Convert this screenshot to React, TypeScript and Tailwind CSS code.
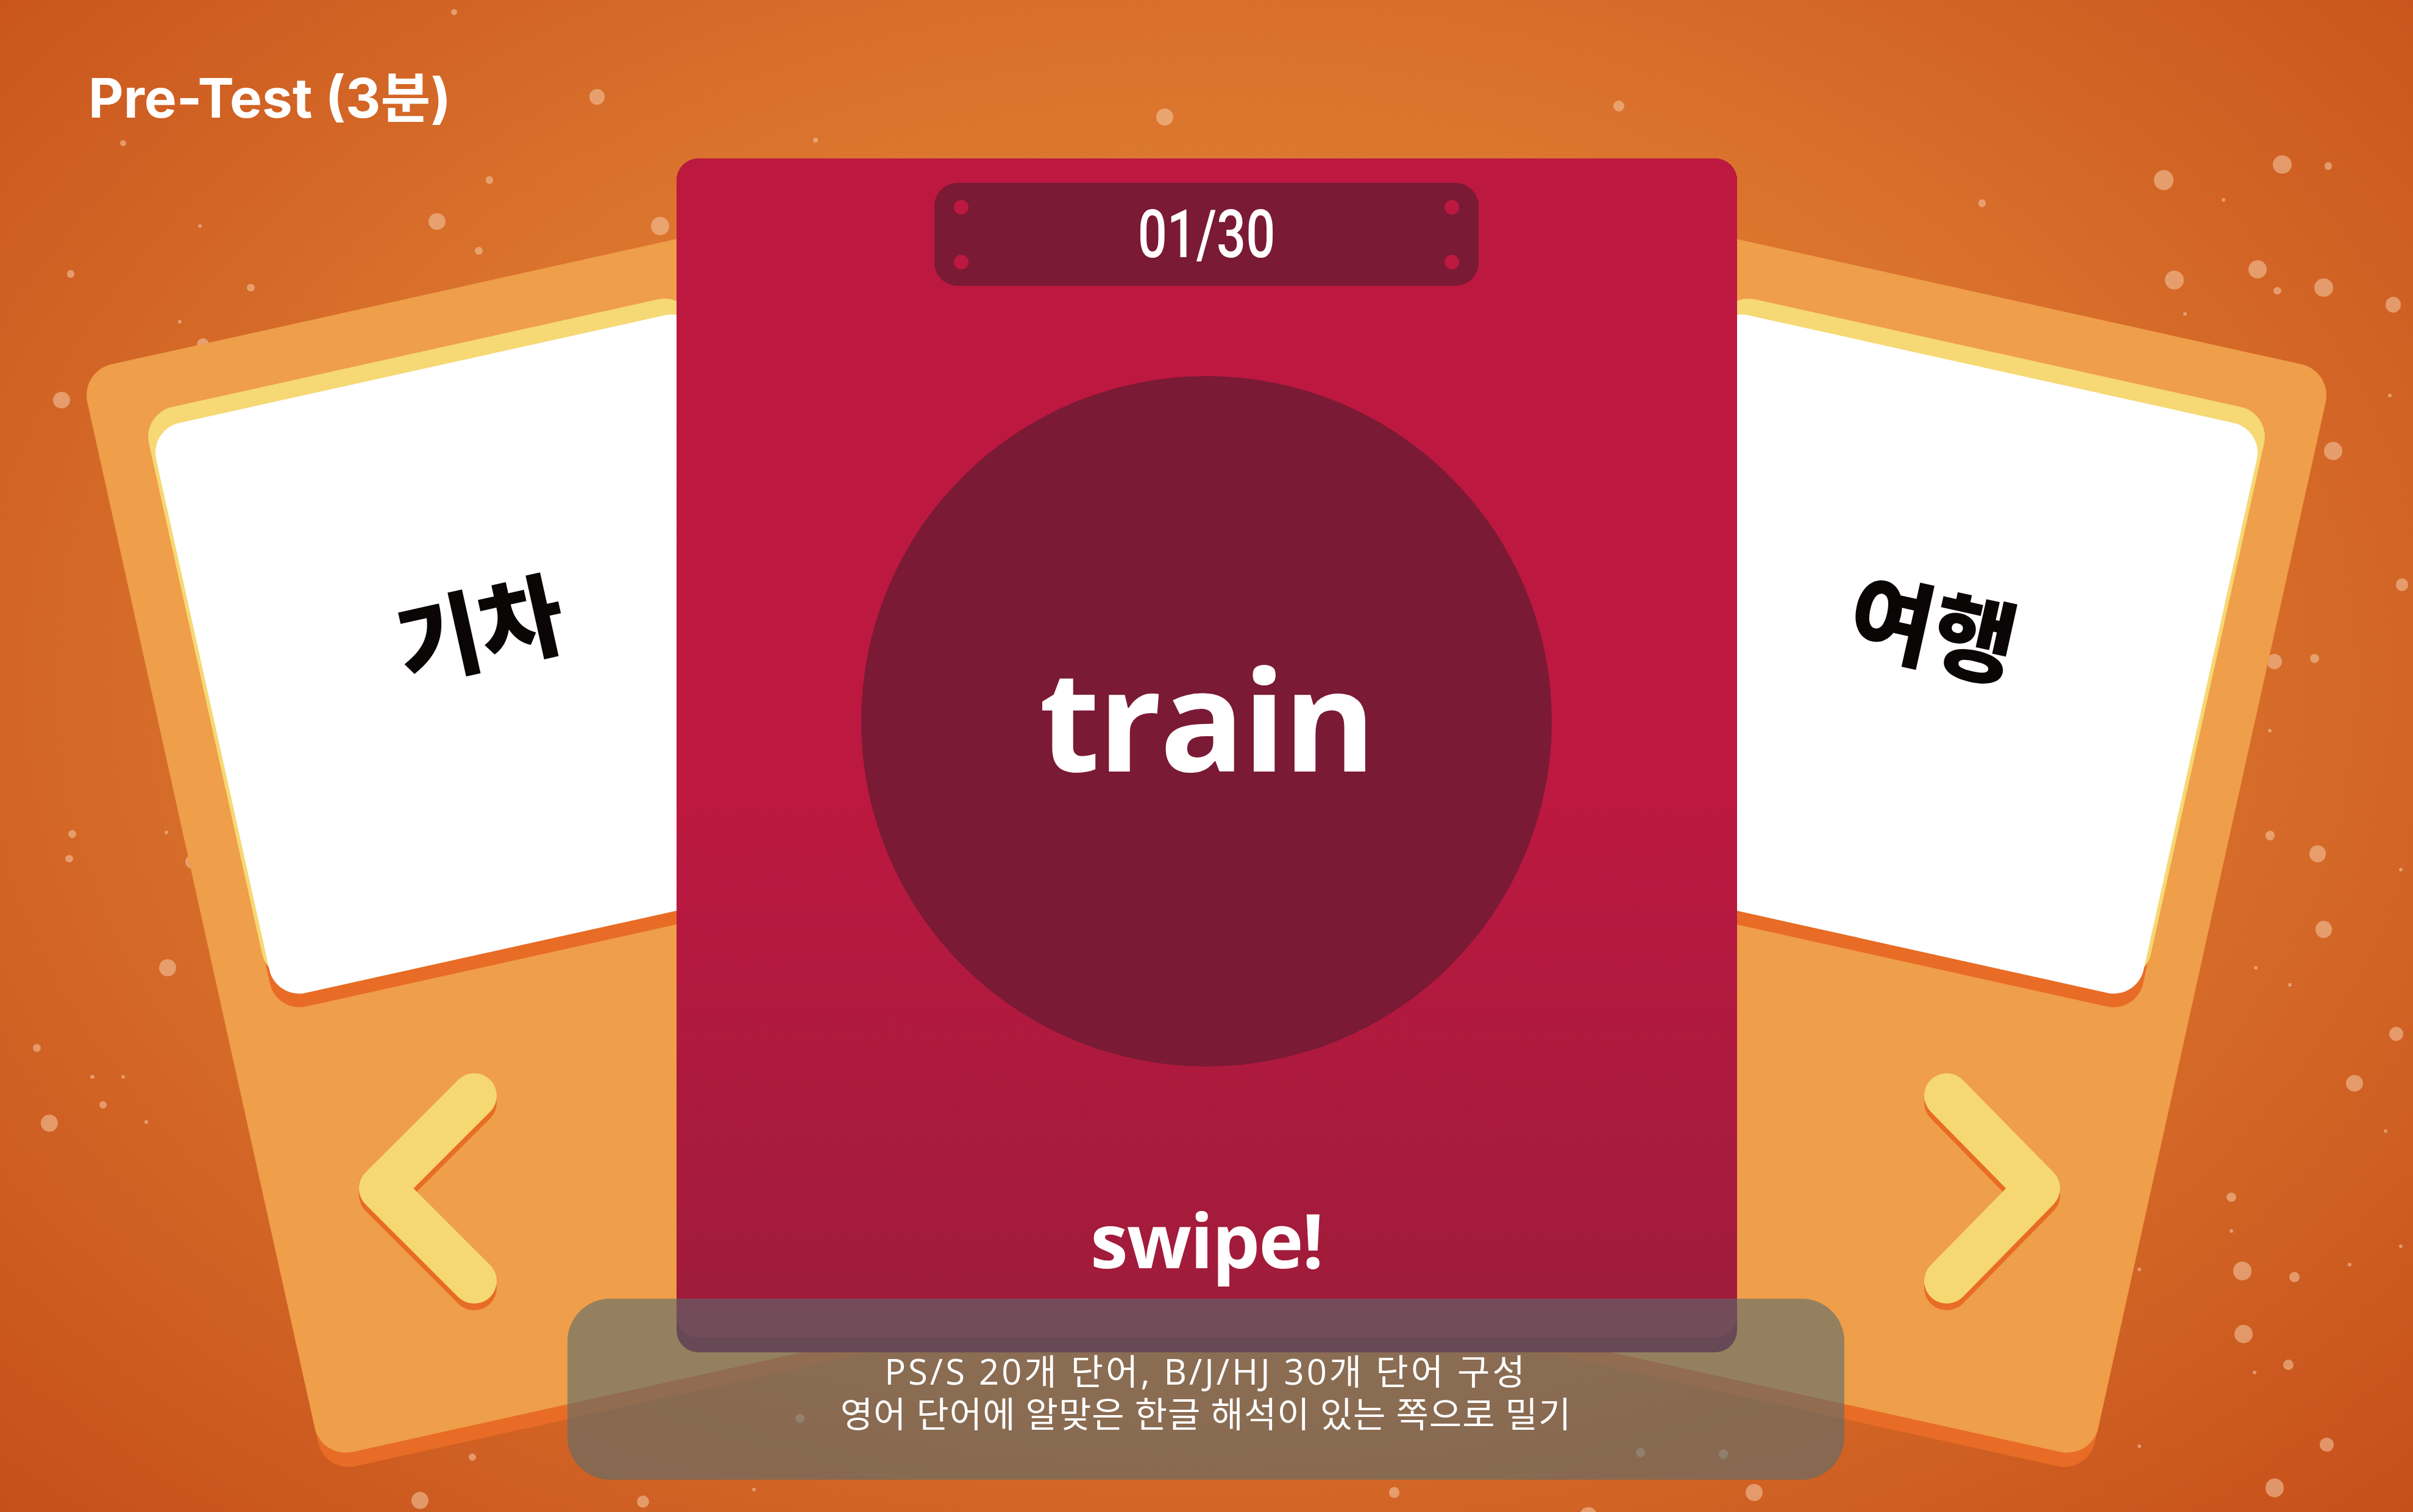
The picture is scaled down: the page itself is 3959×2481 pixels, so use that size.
const SCALE = 3959 / 1568

// background specks, in the coordinates of the 1568px-wide mockup: [x, y, r]
const dots: [number, number, number][] = [
  [295, 8, 2], [388, 63, 5], [80, 93, 2], [318, 117, 2.5], [284, 144, 5.5], [429, 147, 6],
  [311, 163, 2.5], [130, 147, 1.2], [46, 178, 2.5], [163, 187, 2.5], [117, 209, 1.2], [132, 224, 4],
  [40, 260, 5.5], [757, 76, 5.5], [530, 91, 1.5], [1052, 69, 3.5], [1406, 117, 6.5], [1483, 107, 6],
  [1513, 108, 2.5], [1288, 132, 2.5], [1413, 182, 6], [1467, 175, 6], [1480, 189, 2.5], [1510, 187, 6],
  [1555, 198, 5], [1445, 130, 1.2], [1420, 204, 1.2], [1516, 293, 6], [1553, 257, 1.2], [1478, 430, 5],
  [1504, 428, 3], [1475, 475, 1.2], [1561, 380, 4], [1475, 543, 3], [1506, 555, 5.5], [1560, 565, 1.2],
  [1510, 604, 5.5], [1466, 629, 1.2], [1488, 640, 1.2], [1530, 704, 5.5], [1557, 672, 4.5],
  [1450, 778, 3], [1457, 826, 6], [1491, 830, 3.5], [1450, 800, 1.2], [1390, 825, 1.2], [1527, 822, 1.2],
  [1458, 867, 6], [1487, 887, 3.5], [1465, 892, 1.2], [1512, 939, 4.5], [1478, 967, 6], [1390, 940, 1.2],
  [1560, 810, 1.2], [47, 542, 2.5], [108, 541, 1.2], [45, 558, 2.5], [125, 560, 4.5], [133, 597, 1.2],
  [109, 629, 5.5], [24, 681, 2.5], [60, 700, 1.2], [67, 718, 2.5], [32, 730, 5.5], [95, 729, 1.2],
  [80, 700, 1.2], [273, 975, 5.5], [418, 976, 4], [307, 947, 2.5], [490, 968, 1.2], [520, 922, 3],
  [906, 970, 3.5], [1066, 944, 3], [1120, 945, 3], [1032, 985, 5.5], [1140, 970, 5.5], [1550, 735, 1.2],
]

function SideCard({ side, word }: { side: 'left' | 'right'; word: string }) {
  const isLeft = side === 'left'

  return (
    <div
      className={`absolute top-[609px] h-[1828px] w-[1096px] ${
        isLeft
          ? 'left-[132px] origin-top-left rotate-[-12.5deg]'
          : 'right-[132px] origin-top-right rotate-[12.5deg]'
      }`}
    >
      <div className="absolute inset-0 translate-y-[24px] rounded-[52px] bg-[#e86c25]" />
      <div className="absolute inset-0 rounded-[52px] bg-[#ef9e4a]" />

      <div className="absolute left-[90px] top-[118px] h-[958px] w-[916px]">
        <div
          className={`absolute inset-0 translate-y-[22px] rounded-[50px] bg-[#e86c25] ${
            isLeft ? '-translate-x-[4px]' : 'translate-x-[4px]'
          }`}
        />
        <div
          className={`absolute inset-0 -translate-y-[28px] rounded-[50px] bg-[#f6d874] ${
            isLeft ? '-translate-x-[6px]' : 'translate-x-[6px]'
          }`}
        />
        <div className="relative flex h-full items-center justify-center rounded-[50px] bg-white pb-[100px]">
          <span className="font-['Noto_Sans_CJK_KR',sans-serif] text-[150px] font-black leading-none text-[#0a0605]">
            {word}
          </span>
        </div>
      </div>
    </div>
  )
}

function Chevron({ side }: { side: 'left' | 'right' }) {
  const points =
    side === 'left' ? '778,1798 626,1950 778,2102' : '3194,1798 3343,1950 3194,2102'
  const box = side === 'left' ? 'left-[540px]' : 'left-[3120px]'
  const viewX = side === 'left' ? 540 : 3120

  return (
    <svg
      className={`absolute top-[1720px] h-[460px] w-[300px] ${box}`}
      viewBox={`${viewX} 1720 300 460`}
    >
      <polyline
        points={points}
        transform="translate(0 11)"
        fill="none"
        stroke="#e86c25"
        strokeWidth={74}
        strokeLinecap="round"
        strokeLinejoin="round"
      />
      <polyline
        points={points}
        fill="none"
        stroke="#f6d872"
        strokeWidth={74}
        strokeLinecap="round"
        strokeLinejoin="round"
      />
    </svg>
  )
}

function Holes() {
  return (
    <div className="flex flex-col gap-[66px]">
      <span className="size-[24px] rounded-full bg-[#bd1840]" />
      <span className="size-[24px] rounded-full bg-[#bd1840]" />
    </div>
  )
}

function MainCard() {
  return (
    <div className="h-[1959px] w-[1740px] rounded-[36px] bg-[#7d1631]">
      <div className="flex h-[1935px] flex-col items-center rounded-[36px] bg-[linear-gradient(to_bottom,#bd1840_0%,#bc1840_55%,#9e1c3a_100%)]">
        <div className="mt-[40px] flex h-[169px] w-[893px] items-center justify-between rounded-[38px] bg-[#7a1a35] px-[32px]">
          <Holes />
          <span className="scale-x-[0.77] font-['Roboto',sans-serif] text-[110px] font-medium leading-none text-white">
            01/30
          </span>
          <Holes />
        </div>

        <div className="mt-[148px] flex size-[1133px] items-center justify-center rounded-full bg-[#7a1a35] pb-[14px]">
          <span className="font-['Open_Sans',sans-serif] text-[230px] font-bold leading-none tracking-[-3px] text-white">
            train
          </span>
        </div>

        <p className="mt-[221px] font-['Open_Sans',sans-serif] text-[124px] font-bold leading-none tracking-[-2px] text-white">
          swipe!
        </p>
      </div>
    </div>
  )
}

export default function App() {
  return (
    <div className="relative h-[2481px] w-[3959px] overflow-hidden bg-[radial-gradient(ellipse_at_50%_45%,#e4883d_0%,#db752e_50%,#c64f1a_100%)]">
      {dots.map(([x, y, r], index) => (
        <span
          key={index}
          className="absolute rounded-full bg-[#f5caa5]/55"
          style={{
            left: (x - r) * SCALE,
            top: (y - r) * SCALE,
            width: r * 2 * SCALE,
            height: r * 2 * SCALE,
          }}
        />
      ))}

      <SideCard side="left" word="기차" />
      <SideCard side="right" word="여행" />
      <Chevron side="left" />
      <Chevron side="right" />

      <h1 className="relative pl-[145px] pt-[116px] font-['Inter','Noto_Sans_CJK_KR',sans-serif] text-[89px] font-bold leading-none text-white">
        Pre-Test (3분)
      </h1>

      <div className="relative z-10 mt-[55px] flex justify-center">
        <MainCard />
      </div>

      <div className="absolute left-[931px] top-[2131px] z-20 flex h-[297px] w-[2095px] flex-col items-center justify-center rounded-[70px] bg-[#566c6e]/60 pt-[10px] font-['Open_Sans','Noto_Sans_CJK_KR',sans-serif] text-[58px] font-normal leading-[70px] text-white">
        <p className="tracking-[4px]">PS/S 20개 단어, B/J/HJ 30개 단어 구성</p>
        <p className="tracking-[1px]">영어 단어에 알맞은 한글 해석이 있는 쪽으로 밀기</p>
      </div>
    </div>
  )
}
